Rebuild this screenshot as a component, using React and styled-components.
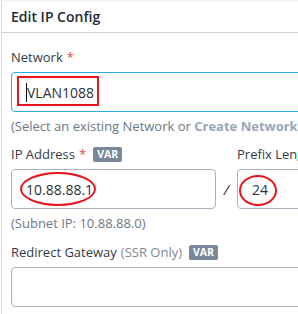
import styled, { createGlobalStyle } from "styled-components";

const Global = createGlobalStyle`
  html, body {
    margin: 0;
    padding: 0;
    background: #fff;
    overflow: hidden;
  }
  body {
    font-family: "Open Sans", "Liberation Sans", sans-serif;
    color: #333b47;
  }
`;

const Panel = styled.div`
  width: 420px;
  height: 314px;
  margin-left: 1px;
  border-left: 1px solid #d4d7dc;
  box-shadow: inset 0 2px 2px -1px rgba(0,0,0,0.08);
  background: #fff;
`;

const Header = styled.div`
  height: 33px;
  box-sizing: border-box;
  padding: 7px 0 0 9px;
  border-bottom: 1px solid #cfcfcf;
  font-size: 14px;
  font-weight: 600;
  color: #232a33;
`;

const Body = styled.div`
  padding: 14px 0 0 9px;
`;

const Field = styled.div`
  margin-top: ${p => p.top || 0}px;
`;

const Label = styled.div`
  display: flex;
  align-items: center;
  height: 20px;
  font-size: 13px;
  color: #333b47;
  white-space: nowrap;
`;

const Req = styled.span`
  color: #e2473f;
  margin-left: 4px;
`;

const Muted = styled.span`
  color: #7f8896;
  margin-left: 4px;
`;

const Badge = styled.span`
  display: inline-block;
  margin-left: 7px;
  padding: 1px 4px;
  font-size: 10.5px;
  font-weight: 700;
  line-height: 13px;
  color: #fff;
  background: #7a8699;
  border-radius: 2px;
`;

const Input = styled.div`
  position: relative;
  box-sizing: border-box;
  height: 40px;
  margin-top: 5px;
  border: 1px solid ${p => (p.focus ? "#34a9df" : "#a9b4c3")};
  border-radius: 4px;
  display: flex;
  align-items: center;
  padding-left: 14px;
  font-size: 14px;
  color: #2b3240;
`;

const Caret = styled.span`
  display: inline-block;
  width: 1px;
  height: 19px;
  background: #111;
`;

const Help = styled.div`
  margin-top: 5px;
  height: 18px;
  line-height: 18px;
  font-size: 13px;
  color: #6e7785;
  white-space: nowrap;
`;

const Link = styled.span`
  font-weight: 700;
  color: #98a5b8;
`;

const Row = styled.div`
  display: grid;
  grid-template-columns: 205px 21px 1fr;
  align-items: end;
  margin-top: 9px;
`;

const Slash = styled.div`
  height: 40px;
  display: flex;
  align-items: center;
  justify-content: center;
  font-size: 15px;
  font-style: italic;
  color: #2b3a55;
`;

const Mark = styled.div`
  position: absolute;
  border: 2px solid #e8141b;
  border-radius: ${p => (p.oval ? "50%" : "0")};
  pointer-events: none;
`;

export default function App() {
  return (
    <>
      <Global />
      <Panel>
        <Header>Edit IP Config</Header>
        <Body>
          <Field>
            <Label>Network<Req>*</Req></Label>
            <Input focus>
              <Caret />VLAN1088
              <Mark style={{ left: 5, top: 3, width: 78, height: 26 }} />
            </Input>
            <Help>(Select an existing Network or <Link>Create Network</Link></Help>
          </Field>
          <Row>
            <div>
              <Label>IP Address<Req>*</Req><Badge>VAR</Badge></Label>
              <Input>
                10.88.88.1
                <Mark oval style={{ left: 8, top: 2, width: 72, height: 30 }} />
              </Input>
            </div>
            <Slash>/</Slash>
            <div>
              <Label>Prefix Length<Req>*</Req></Label>
              <Input>
                24
                <Mark oval style={{ left: 1, top: 5, width: 34, height: 27 }} />
              </Input>
            </div>
          </Row>
          <Help>(Subnet IP: 10.88.88.0)</Help>
          <Field top={10}>
            <Label>
              Redirect Gateway<Muted>(SSR Only)</Muted><Badge>VAR</Badge>
            </Label>
            <Input />
          </Field>
        </Body>
      </Panel>
    </>
  );
}
